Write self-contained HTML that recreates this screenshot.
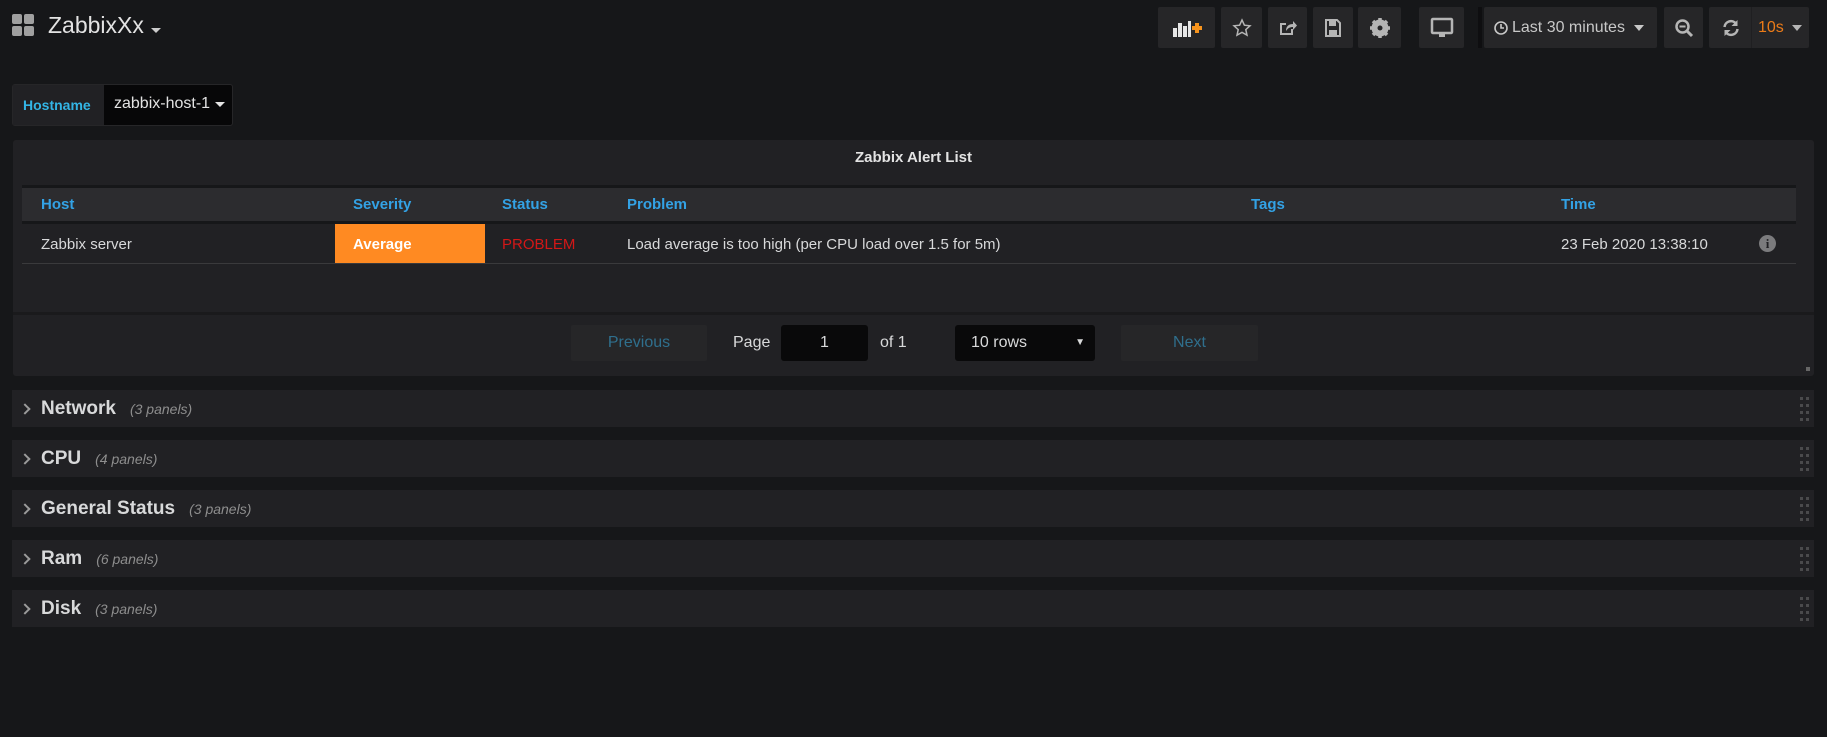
<!DOCTYPE html>
<html><head><meta charset="utf-8"><style>
*{margin:0;padding:0;box-sizing:border-box}
body{width:1827px;height:737px;background:#161719;font-family:"Liberation Sans",sans-serif;color:#d8d9da;position:relative;overflow:hidden}
.a{position:absolute}
.btn{position:absolute;top:7px;height:41px;background:#262628;border-radius:2px;display:flex;align-items:center;justify-content:center;color:#b5b5b5}
.row{position:absolute;left:12px;width:1802px;height:37px;background:#212124}
.row .chev{position:absolute;left:9px;top:15px;width:8px;height:8px;border-right:2px solid #9a9a9a;border-bottom:2px solid #9a9a9a;transform:rotate(-45deg)}
.row .t{position:absolute;left:29px;top:8px;font-size:19px;font-weight:bold;color:#d8d9da}
.row .t i{font-size:14px;font-weight:normal;color:#8e8e8e;margin-left:14px}
.grip{position:absolute;right:4px;top:7px;width:10px;height:26px;background-image:linear-gradient(#4a4a4c 3px,transparent 3px);background-size:6px 7px;-webkit-mask:linear-gradient(90deg,#000 3px,transparent 3px,transparent 6px,#000 6px,#000 9px,transparent 9px)}
.th{position:absolute;top:8px;color:#33a2e5;font-weight:bold;font-size:15px}
.td{position:absolute;top:12px;font-size:15px;color:#d8d9da}
</style></head><body>
<div class="a" style="left:12px;top:14px;width:22px;height:22px">
<div class="a" style="left:0;top:0;width:10px;height:10px;background:#a0a0a0;border-radius:2px"></div>
<div class="a" style="left:12px;top:0;width:10px;height:10px;background:#a0a0a0;border-radius:2px"></div>
<div class="a" style="left:0;top:12px;width:10px;height:10px;background:#a0a0a0;border-radius:2px"></div>
<div class="a" style="left:12px;top:12px;width:10px;height:10px;background:#a0a0a0;border-radius:2px"></div>
</div>
<div class="a" style="left:48px;top:12px;font-size:23px;color:#e3e3e3">ZabbixXx</div>
<div class="a" style="left:151px;top:28px;border:5px solid transparent;border-top:5px solid #ccc"></div>

<div class="btn" style="left:1158px;width:57px">
<svg width="32" height="20" viewBox="0 0 32 20"><rect x="2" y="10" width="4" height="9" fill="#e6e6e6"/><rect x="7" y="5" width="4" height="14" fill="#e6e6e6"/><rect x="12" y="8" width="4" height="11" fill="#e6e6e6"/><rect x="17" y="3" width="3" height="16" fill="#e6e6e6"/><rect x="21" y="8" width="10" height="4" fill="#f7941d"/><rect x="24" y="5" width="4" height="10" fill="#f7941d"/></svg></div>
<div class="btn" style="left:1221px;width:41px"><svg width="20" height="20" viewBox="0 0 20 20"><path d="M10 2l2.4 5.2 5.6.6-4.2 3.8 1.2 5.6L10 14.4 5 17.2l1.2-5.6L2 7.8l5.6-.6z" fill="none" stroke="#b5b5b5" stroke-width="1.5"/></svg></div>
<div class="btn" style="left:1268px;width:39px"><svg width="20" height="20" viewBox="0 0 20 20"><path d="M14 11v5H3V6h5" fill="none" stroke="#b5b5b5" stroke-width="2"/><path d="M8 13c0-5 3-7 7-7V3l4 4.5-4 4.5V9c-3 0-5 1-7 4z" fill="#b5b5b5"/></svg></div>
<div class="btn" style="left:1313px;width:40px"><svg width="18" height="20" viewBox="0 0 18 20"><path d="M2 2h11l3 3v13H2z" fill="none" stroke="#b5b5b5" stroke-width="2"/><rect x="5" y="3" width="7" height="5" fill="#b5b5b5"/><rect x="5" y="12" width="8" height="5" fill="#b5b5b5"/></svg></div>
<div class="btn" style="left:1358px;width:43px"><svg width="22" height="22" viewBox="0 0 22 22"><circle cx="11" cy="11" r="6.5" fill="none" stroke="#b5b5b5" stroke-width="4"/><g stroke="#b5b5b5" stroke-width="3.5"><line x1="11" y1="1" x2="11" y2="21"/><line x1="1" y1="11" x2="21" y2="11"/><line x1="4" y1="4" x2="18" y2="18"/><line x1="18" y1="4" x2="4" y2="18"/></g><circle cx="11" cy="11" r="2.5" fill="#262628"/></svg></div>
<div class="btn" style="left:1419px;width:45px"><svg width="24" height="22" viewBox="0 0 24 22"><rect x="2" y="2" width="20" height="14" rx="1" fill="none" stroke="#b5b5b5" stroke-width="2.5"/><rect x="9" y="16" width="6" height="4" fill="#b5b5b5"/></svg></div>
<div class="a" style="left:1478px;top:7px;width:4px;height:41px;background:#0e0e10"></div>
<div class="btn" style="left:1484px;width:173px;justify-content:flex-start;padding-left:10px;font-size:16px;color:#c8c8c8">
<svg width="14" height="14" viewBox="0 0 14 14" style="margin-right:4px"><circle cx="7" cy="7" r="6" fill="none" stroke="#c8c8c8" stroke-width="1.6"/><path d="M7 3v4h3" fill="none" stroke="#c8c8c8" stroke-width="1.6"/></svg>Last 30 minutes
<span style="margin-left:9px;border:5px solid transparent;border-top:6px solid #c8c8c8;margin-top:6px"></span></div>
<div class="btn" style="left:1664px;width:39px"><svg width="20" height="20" viewBox="0 0 20 20"><circle cx="8.5" cy="8.5" r="6" fill="none" stroke="#b5b5b5" stroke-width="2.5"/><line x1="13" y1="13" x2="18" y2="18" stroke="#b5b5b5" stroke-width="3"/><line x1="5.5" y1="8.5" x2="11.5" y2="8.5" stroke="#b5b5b5" stroke-width="2"/></svg></div>
<div class="btn" style="left:1709px;width:100px;justify-content:flex-start">
<svg width="20" height="20" viewBox="0 0 20 20" style="margin-left:12px"><path d="M3.5 9A6.5 6.5 0 0 1 15 5.5M16.5 11A6.5 6.5 0 0 1 5 14.5" fill="none" stroke="#b5b5b5" stroke-width="2.5"/><path d="M16.5 2v6h-6zM3.5 18v-6h6z" fill="#b5b5b5"/></svg>
<span style="width:1px;height:41px;background:#1f1f21;margin-left:10px"></span>
<span style="color:#eb7b18;font-size:16px;margin-left:6px">10s</span>
<span style="margin-left:8px;border:5px solid transparent;border-top:6px solid #b5b5b5;margin-top:6px"></span></div>

<div class="a" style="left:12px;top:84px;width:221px;height:42px;border:1px solid #262628;border-radius:3px;background:#070708"></div>
<div class="a" style="left:13px;top:85px;width:91px;height:40px;background:#212124;color:#33b5e5;font-weight:bold;font-size:14px;line-height:40px;padding-left:10px">Hostname</div>
<div class="a" style="left:114px;top:95px;font-size:16px;color:#e3e3e3">zabbix-host-1</div>
<div class="a" style="left:215px;top:102px;border:5px solid transparent;border-top:5px solid #e3e3e3"></div>

<div class="a" style="left:13px;top:140px;width:1801px;height:236px;background:#212124;border-radius:3px"></div>
<div class="a" style="left:13px;top:149px;width:1801px;text-align:center;font-size:15px;font-weight:bold;color:#e3e3e3">Zabbix Alert List</div>
<div class="a" style="left:22px;top:185px;width:1774px;height:3px;background:#161719"></div>
<div class="a" style="left:22px;top:188px;width:1774px;height:33px;background:#2c2c2f">
<div class="th" style="left:19px">Host</div><div class="th" style="left:331px">Severity</div><div class="th" style="left:480px">Status</div><div class="th" style="left:605px">Problem</div><div class="th" style="left:1229px">Tags</div><div class="th" style="left:1539px">Time</div></div>
<div class="a" style="left:22px;top:221px;width:1774px;height:3px;background:#161719"></div>
<div class="a" style="left:22px;top:224px;width:1774px;height:40px;border-bottom:1px solid #3a3a3c">
<div class="td" style="left:19px">Zabbix server</div>
<div class="a" style="left:313px;top:0;width:150px;height:39px;background:#ff8a22"></div>
<div class="td" style="left:331px;font-weight:bold;color:#fff">Average</div>
<div class="td" style="left:480px;color:#d41717">PROBLEM</div>
<div class="td" style="left:605px">Load average is too high (per CPU load over 1.5 for 5m)</div>
<div class="td" style="left:1539px">23 Feb 2020 13:38:10</div>
<div class="a" style="left:1737px;top:11px;width:17px;height:17px;border-radius:50%;background:#7b7b7d;color:#212124;font-weight:bold;font-size:13px;text-align:center;line-height:17px;font-family:'Liberation Serif',serif">i</div>
</div>
<div class="a" style="left:13px;top:312px;width:1801px;height:3px;background:#1a1a1c"></div>
<div class="a" style="left:571px;top:325px;width:136px;height:36px;background:#262628;border-radius:2px;color:#2f6f8d;font-size:16px;text-align:center;line-height:36px">Previous</div>
<div class="a" style="left:733px;top:334px;font-size:16px">Page</div>
<div class="a" style="left:781px;top:325px;width:87px;height:36px;background:#09090a;border-radius:3px;text-align:center;line-height:36px;font-size:16px">1</div>
<div class="a" style="left:880px;top:334px;font-size:16px">of 1</div>
<div class="a" style="left:955px;top:325px;width:140px;height:36px;background:#09090a;border-radius:3px;font-size:16px;line-height:36px;padding-left:16px">10 rows<span style="position:absolute;right:10px;font-size:10px">▼</span></div>
<div class="a" style="left:1121px;top:325px;width:137px;height:36px;background:#262628;border-radius:2px;color:#2f6f8d;font-size:16px;text-align:center;line-height:36px">Next</div>
<div class="a" style="left:1806px;top:367px;width:4px;height:4px;background:#666"></div>

<div class="row" style="top:390px"><div class="chev"></div><div class="t">Network<i>(3 panels)</i></div><div class="grip"></div></div>
<div class="row" style="top:440px"><div class="chev"></div><div class="t">CPU<i>(4 panels)</i></div><div class="grip"></div></div>
<div class="row" style="top:490px"><div class="chev"></div><div class="t">General Status<i>(3 panels)</i></div><div class="grip"></div></div>
<div class="row" style="top:540px"><div class="chev"></div><div class="t">Ram<i>(6 panels)</i></div><div class="grip"></div></div>
<div class="row" style="top:590px"><div class="chev"></div><div class="t">Disk<i>(3 panels)</i></div><div class="grip"></div></div>
</body></html>
